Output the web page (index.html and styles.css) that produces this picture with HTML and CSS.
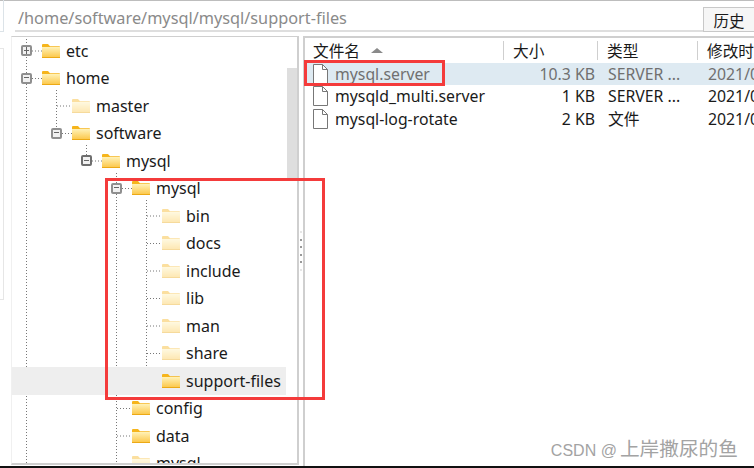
FILE: index.html
```html
<!DOCTYPE html>
<html lang="zh-CN">
<head>
<meta charset="utf-8">
<title>mysql support-files</title>
<link rel="stylesheet" href="styles.css">
</head>
<body>
<svg class="defs" width="0" height="0" aria-hidden="true">
  <defs>
    <linearGradient id="fg" x1="0" y1="0" x2="0" y2="1">
      <stop offset="0" stop-color="#fff2b8"/>
      <stop offset="1" stop-color="#fcc94e"/>
    </linearGradient>
    <symbol id="folder" viewBox="0 0 18 14">
      <path d="M0 1.2C0 .5.5 0 1.2 0H6l2 2.2h9c.6 0 1 .4 1 1V14H0z" fill="#f6b51c"/>
      <rect x="0" y="3" width="18" height="10" fill="url(#fg)"/>
      <rect x="0" y="13" width="18" height="1" fill="#eca915"/>
    </symbol>
    <symbol id="file" viewBox="0 0 16 20">
      <path d="M1.5.5H10.5L15.500 5.500V19.500H1.500Z" fill="#fff" stroke="#777"/>
      <path d="M10.500.5V5.500H15.500" fill="none" stroke="#777"/>
    </symbol>
  </defs>
</svg>
<div class="app">
  <div class="topbar">
    <div class="stub-top"></div>
    <div class="address">/home/software/mysql/mysql/support-files</div>
    <button class="history">历史</button>
  </div>
  <div class="main">
    <div class="stub-side"></div>
    <div class="tree">
      <svg class="lines" width="287" height="428" viewBox="11 36 287 428" aria-hidden="true">
        <path d="M26.500 36V464M56.500 90V133M86.500 145V161M116.500 173V464M146.500 200V381
                 M32 51H42M32 78.500H42M57 106H72M62 133.500H72M92 161H102M122 188.500H132M147 216H162M147 243.500H162M147 271H162M147 298.500H162M147 326H162M147 353.500H162M147 381H162M117 408.500H132M117 436H132M117 463.500H132"
              fill="none" stroke="#777" stroke-dasharray="1 2"/>
      </svg>
      <div class="row d0"><span class="toggle plus"></span><svg class="fold"><use href="#folder"/></svg><span>etc</span></div>
      <div class="row d0"><span class="toggle"></span><svg class="fold"><use href="#folder"/></svg><span>home</span></div>
      <div class="row d1"><span class="slot"></span><svg class="fold pale"><use href="#folder"/></svg><span>master</span></div>
      <div class="row d1"><span class="toggle"></span><svg class="fold"><use href="#folder"/></svg><span>software</span></div>
      <div class="row d2"><span class="toggle dark"></span><svg class="fold"><use href="#folder"/></svg><span>mysql</span></div>
      <div class="row d3"><span class="toggle"></span><svg class="fold"><use href="#folder"/></svg><span>mysql</span></div>
      <div class="row d4"><span class="slot"></span><svg class="fold pale"><use href="#folder"/></svg><span>bin</span></div>
      <div class="row d4"><span class="slot"></span><svg class="fold pale"><use href="#folder"/></svg><span>docs</span></div>
      <div class="row d4"><span class="slot"></span><svg class="fold pale"><use href="#folder"/></svg><span>include</span></div>
      <div class="row d4"><span class="slot"></span><svg class="fold pale"><use href="#folder"/></svg><span>lib</span></div>
      <div class="row d4"><span class="slot"></span><svg class="fold pale"><use href="#folder"/></svg><span>man</span></div>
      <div class="row d4"><span class="slot"></span><svg class="fold pale"><use href="#folder"/></svg><span>share</span></div>
      <div class="row d4 current"><span class="slot"></span><svg class="fold"><use href="#folder"/></svg><span>support-files</span></div>
      <div class="row d3"><span class="slot"></span><svg class="fold"><use href="#folder"/></svg><span>config</span></div>
      <div class="row d3"><span class="slot"></span><svg class="fold"><use href="#folder"/></svg><span>data</span></div>
      <div class="row d3"><span class="slot"></span><svg class="fold pale"><use href="#folder"/></svg><span>mysql</span></div>
      <div class="scrollthumb"></div>
    </div>
    <div class="splitter"><i class="faint"></i><i></i><i></i><i></i><i></i><i class="faint"></i></div>
    <div class="files">
      <div class="fhead">
        <div class="col c-name">文件名<span class="sort"></span></div>
        <div class="col c-size">大小</div>
        <div class="col c-type">类型</div>
        <div class="col c-date">修改时间</div>
      </div>
      <div class="frow selected">
        <div class="c-name"><svg class="ficon"><use href="#file"/></svg>mysql.server</div>
        <div class="c-size num">10.3 KB</div>
        <div class="c-type">SERVER ...</div>
        <div class="c-date">2021/09/06</div>
      </div>
      <div class="frow">
        <div class="c-name"><svg class="ficon"><use href="#file"/></svg>mysqld_multi.server</div>
        <div class="c-size num">1 KB</div>
        <div class="c-type">SERVER ...</div>
        <div class="c-date">2021/09/06</div>
      </div>
      <div class="frow">
        <div class="c-name"><svg class="ficon"><use href="#file"/></svg>mysql-log-rotate</div>
        <div class="c-size num">2 KB</div>
        <div class="c-type">文件</div>
        <div class="c-date">2021/09/06</div>
      </div>
    </div>
  </div>
  <div class="blackline"></div>
  <div class="redbox box-tree"></div>
  <div class="redbox box-file"></div>
  <div class="watermark">CSDN @<span class="wm-cjk">上岸撒尿的鱼</span></div>
</div>
</body>
</html>
```
FILE: styles.css
```css
* { box-sizing: border-box; }
html, body { margin: 0; padding: 0; background: #fff; }
body { width: 754px; height: 468px; overflow: hidden; font-family: "Noto Sans", "Noto Sans CJK SC", sans-serif; font-size: 16px; color: #1a1a1a; }
.defs { position: absolute; }
.app { position: relative; width: 754px; height: 468px; display: flex; flex-direction: column; overflow: hidden; }

.topbar { height: 36px; flex: none; display: flex; padding-left: 15px; border-top: 1px solid #bdbdbd; position: relative; }
.stub-top { position: absolute; left: 0; top: -1px; width: 4px; height: 32px; border-right: 1px solid #dce3e8; border-bottom: 1px solid #dce3e8; }
.address { flex: 1; height: 31px; padding: 6px 0 0 3px; border-bottom: 2px solid #dedede; color: #8a8a8a; font-size: 16.300px; line-height: 22px; }
.history { width: 51px; height: 25px; margin-top: 6px; padding: 0; border: 1px solid #c8c8c8; border-right: 0; background: #f6f6f6; color: #1a1a1a; font: 15.500px/22px "Noto Sans CJK SC", sans-serif; }

.main { flex: none; height: 430px; display: flex; position: relative; }
.stub-side { position: absolute; left: 0; top: 12px; width: 4px; height: 252px; border: 1px solid #e6e6e6; border-left: 0; }

.tree { position: relative; margin-left: 11px; width: 288px; height: 429px; border: 1px solid #f0f0f0; border-top: 1px solid #cfcfcf; border-right: 2px solid #cfcfcf; border-bottom: 2px solid #cfcfcf; overflow: hidden; }
.lines { position: absolute; left: -1px; top: -1px; }
.row { position: relative; height: 27.500px; display: flex; align-items: center; line-height: 20px; white-space: nowrap; }
.row.d0 { padding-left: 9px; }
.row.d1 { padding-left: 39px; }
.row.d2 { padding-left: 69px; }
.row.d3 { padding-left: 99px; }
.row.d4 { padding-left: 129px; }
.row.current { background: #eeeeee; margin-right: 11px; }
.slot, .toggle { flex: none; width: 11px; height: 11px; margin-right: 10px; }
.toggle { position: relative; border: 2px solid #8f8f8f; border-radius: 2px; background: #f1f1f1; }
.toggle::before { content: ""; position: absolute; left: 1px; right: 1px; top: 2.500px; height: 1px; background: #666; }
.toggle.dark { border-color: #6e6e6e; }
.toggle.plus::after { content: ""; position: absolute; top: 0; bottom: 0; left: 2.500px; width: 1px; background: #666; }
.fold { flex: none; width: 18px; height: 14px; margin-right: 6px; }
.fold.pale { opacity: .42; }
.scrollthumb { position: absolute; right: 0; top: 31px; width: 10px; height: 113px; background: #dedede; }

.splitter { flex: none; width: 4px; padding-top: 195px; display: flex; flex-direction: column; align-items: center; gap: 5.500px; }
.splitter i { width: 2px; height: 2px; background: #999; }
.splitter i.faint { background: #e6e6e6; }

.files { flex: 1; min-width: 0; margin-right: -40px; border-top: 2px solid #cfcfcf; border-left: 2px solid #cfcfcf; height: 430px; overflow: hidden; font-size: 15.800px; }
.fhead, .frow { display: grid; grid-template-columns: 198px 94px 100px 1fr; }
.fhead { height: 25px; align-items: center; font: 15.700px/22px "Noto Sans CJK SC", sans-serif; }
.col { height: 19px; padding-left: 9px; line-height: 19px; border-left: 1px solid #cfcfcf; white-space: nowrap; }
.col.c-name { border-left: 0; padding-left: 8px; display: flex; align-items: center; }
.sort { width: 0; height: 0; margin-left: 11px; border: 6px solid transparent; border-top: 0; border-bottom: 5px solid #8a8a8a; }
.frow { height: 22.300px; align-items: center; line-height: 20px; white-space: nowrap; }
.frow.selected { background: #deeaf2; color: #707070; }
.frow .c-name { display: flex; align-items: center; padding-left: 7px; }
.ficon { flex: none; width: 16px; height: 20px; margin-right: 7px; }
.frow .num { text-align: right; padding-right: 2px; }
.frow .c-type { padding-left: 11px; }
.frow .c-date { padding-left: 11px; }

.blackline { position: absolute; left: 0; right: 0; bottom: 0; height: 2px; background: #111; }
.redbox { position: absolute; border: 3px solid #f43b3b; }
.box-tree { left: 105px; top: 178px; width: 220px; height: 222px; }
.box-file { left: 304px; top: 60px; width: 141px; height: 26px; }
.watermark { position: absolute; right: 16px; top: 437px; color: #a3a3a3; font: 16px/24px "Liberation Sans", "Noto Sans CJK SC", sans-serif; white-space: nowrap; }
.wm-cjk { margin-left: 3px; font-size: 19.700px; }
```
